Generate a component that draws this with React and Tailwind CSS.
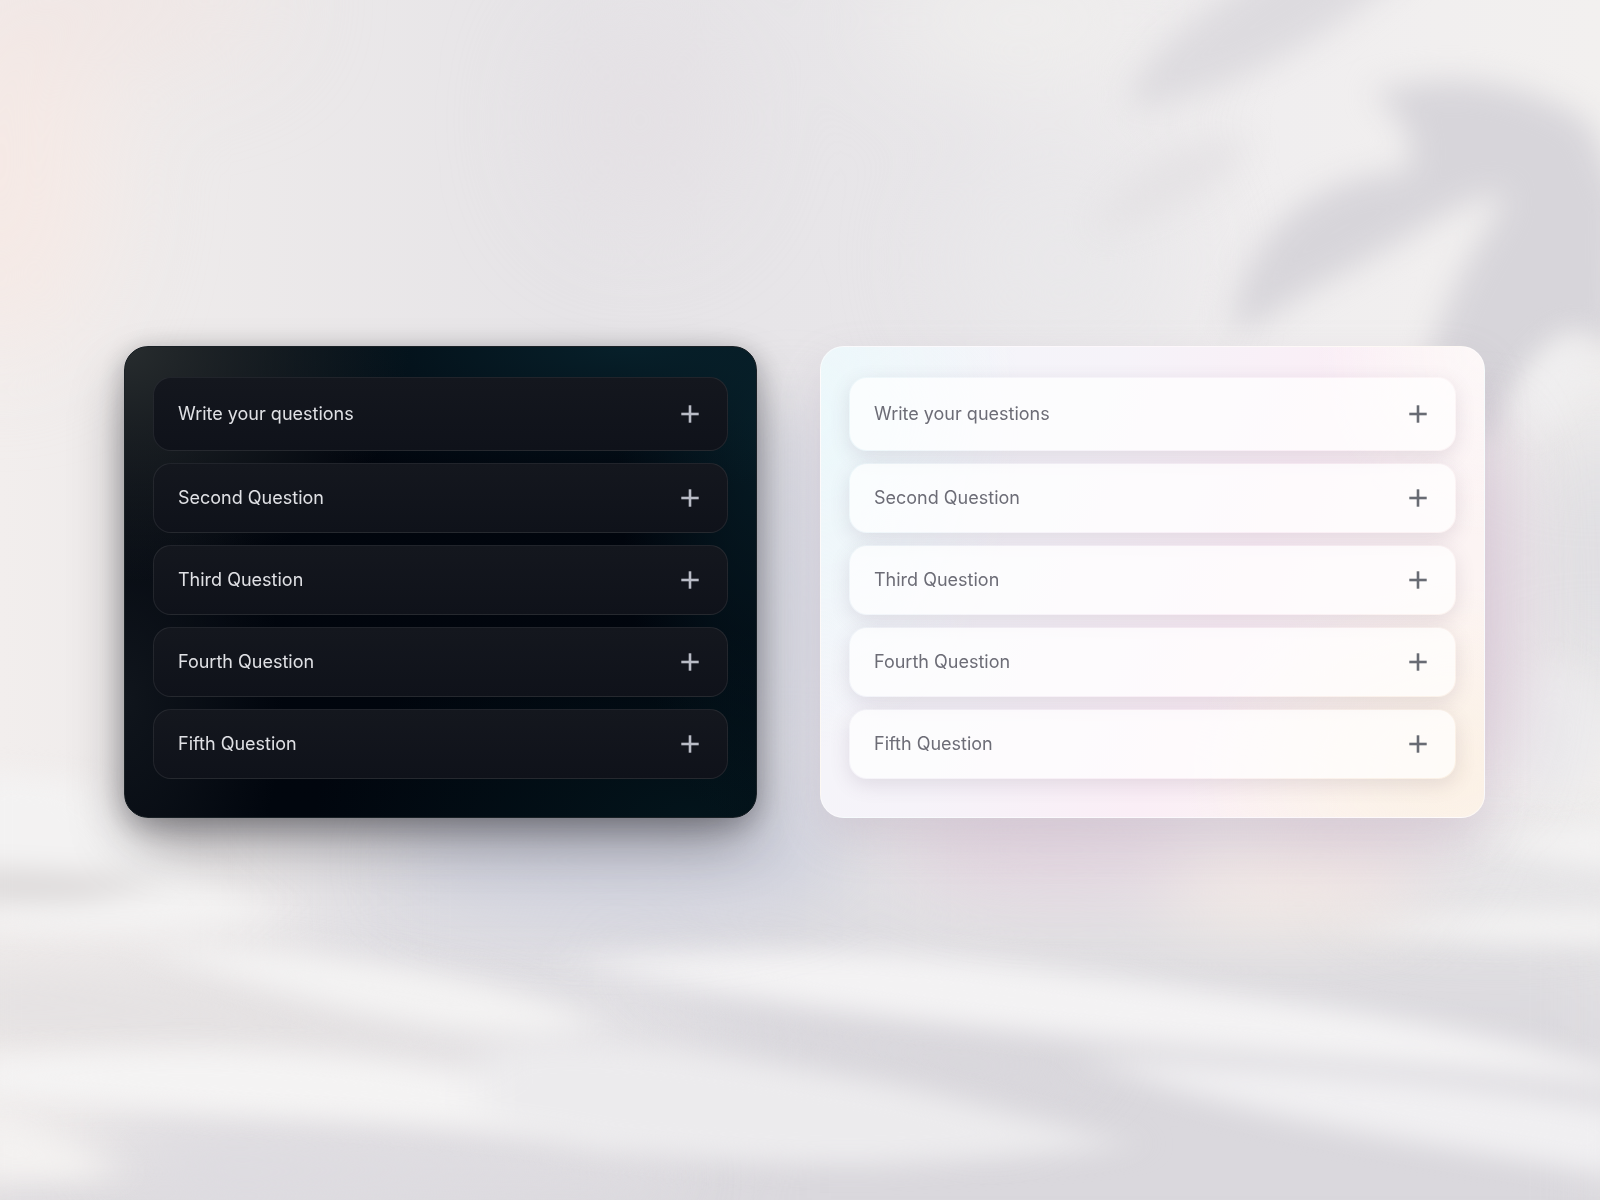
const questions = [
  "Write your questions",
  "Second Question",
  "Third Question",
  "Fourth Question",
  "Fifth Question",
];

function PlusIcon({ className }) {
  return (
    <svg viewBox="0 0 18 18" className={"size-[18px] shrink-0 " + className} fill="currentColor" aria-hidden="true">
      <rect x="0.3" y="7.7" width="17.4" height="2.6" />
      <rect x="7.7" y="0.3" width="2.6" height="17.4" />
    </svg>
  );
}

function Backdrop() {
  return (
    <svg
      className="absolute inset-0 size-full"
      viewBox="0 0 1600 1200"
      preserveAspectRatio="none"
      aria-hidden="true"
    >
      <defs>
        <linearGradient id="wall" x1="0" y1="0" x2="1" y2="0">
          <stop offset="0" stopColor="#f2eeed" />
          <stop offset="0.1" stopColor="#eeebeb" />
          <stop offset="0.35" stopColor="#e6e4e7" />
          <stop offset="0.6" stopColor="#e8e6e9" />
          <stop offset="0.8" stopColor="#f0eeef" />
          <stop offset="1" stopColor="#f2f0ef" />
        </linearGradient>
        <filter id="b14" x="-40%" y="-40%" width="180%" height="180%" colorInterpolationFilters="sRGB">
          <feGaussianBlur stdDeviation="15" />
        </filter>
        <filter id="b20" x="-40%" y="-60%" width="180%" height="220%" colorInterpolationFilters="sRGB">
          <feGaussianBlur stdDeviation="24 13" />
        </filter>
        <filter id="b60" x="-60%" y="-60%" width="220%" height="220%" colorInterpolationFilters="sRGB">
          <feGaussianBlur stdDeviation="55" />
        </filter>
        <filter id="b40" x="-60%" y="-60%" width="220%" height="220%" colorInterpolationFilters="sRGB">
          <feGaussianBlur stdDeviation="34" />
        </filter>
      </defs>
      <rect width="1600" height="1200" fill="url(#wall)" />

      <g filter="url(#b60)">
        <ellipse cx="0" cy="170" rx="100" ry="180" fill="#f5e9e5" />
        <ellipse cx="100" cy="0" rx="170" ry="60" fill="#f0e6e4" />
        <ellipse cx="640" cy="120" rx="80" ry="100" fill="#e4e0e4" />
        <ellipse cx="1020" cy="20" rx="150" ry="50" fill="#f1f0ee" />
        <ellipse cx="1060" cy="260" rx="110" ry="90" fill="#e9e8ea" />
        <rect x="-60" y="1170" width="1720" height="160" fill="#d8d6db" />
        <rect x="700" y="960" width="960" height="300" fill="#dad8dd" />
        <rect x="850" y="860" width="800" height="110" fill="#e3e2e4" />
        <rect x="1530" y="430" width="140" height="260" fill="#dddce0" />
        <rect x="320" y="800" width="560" height="200" fill="#dddce1" />
      </g>
      <g filter="url(#b40)">
        <ellipse cx="1500" cy="880" rx="160" ry="40" fill="#e6e5e7" />
        <path d="M-60 965 C150 970 420 990 560 1040 L420 1055 L-60 1045 Z" fill="#e2dfe0" />
        <path d="M90 1120 C300 1115 520 1130 700 1180 L200 1230 Z" fill="#dddbe0" />
        <path d="M600 960 C760 990 860 1030 1100 1040 L1000 1110 C880 1080 760 1030 600 960 Z" fill="#d9d7dc" />
      </g>

      <g filter="url(#b14)" fill="#d7d5da">
        <path d="M1130 100 C1140 50 1220 0 1280 -40 L1420 -40 C1350 20 1260 85 1140 108 Z" fill="#dddbdf" />
        <path d="M1095 225 C1130 160 1190 135 1250 140 C1230 190 1160 222 1095 232 Z" fill="#e3e1e4" opacity="0.8" />
        <path d="M1372 94 C1450 66 1540 86 1590 124 L1622 200 L1620 350 L1530 320 C1500 360 1480 430 1450 450 L1420 420 C1430 300 1490 230 1505 196 C1470 190 1410 240 1320 285 C1285 302 1255 335 1232 326 C1245 235 1310 175 1408 172 C1418 130 1395 110 1372 94 Z" />
        <path d="M1480 300 C1540 250 1600 240 1620 260 L1620 330 C1560 320 1510 400 1490 450 L1460 410 Z" />
      </g>
      <g filter="url(#b14)">
        <ellipse cx="1552" cy="384" rx="26" ry="56" fill="#efeeef" transform="rotate(34 1552 384)" />
        <ellipse cx="1555" cy="730" rx="45" ry="65" fill="#ebeaec" />
      </g>

      <g filter="url(#b20)" fill="#f3f2f2">
        <path d="M-40 770 L90 780 C130 830 180 880 290 915 C180 938 60 935 -40 925 Z" />
        <path d="M-40 866 C40 870 100 870 160 882 L90 902 L-40 904 Z" fill="#dedbdb" />
        <path d="M150 945 C300 950 480 965 610 1028 C480 1050 330 1015 150 948 Z" />
        <path d="M-40 1060 C140 1045 340 1040 520 1085 C680 1110 760 1130 800 1160 L600 1150 C440 1110 220 1125 -40 1090 Z" fill="#f4f3f3" />
        <path d="M480 1050 C640 1030 800 1070 900 1085 C1000 1110 1080 1130 1130 1145 C900 1175 640 1175 480 1110 Z" fill="#ecebed" />
        <path d="M-40 1105 C60 1125 110 1155 110 1180 L-40 1180 Z" fill="#f3f1f0" />
        <path d="M560 958 C740 946 900 945 1060 970 C1250 995 1500 1025 1640 1080 L1640 1090 C1400 1058 1100 1048 800 1005 C740 995 650 985 560 958 Z" fill="#f3f2f3" />
        <path d="M1080 1055 C1300 1070 1480 1080 1640 1115 L1640 1180 C1450 1145 1250 1125 1080 1055 Z" fill="#f0eff1" />
        <path d="M1480 838 L1640 820 L1640 870 C1590 865 1540 860 1480 838 Z" />
        <path d="M1330 925 C1440 912 1550 908 1640 912 L1640 942 C1540 947 1430 937 1330 925 Z" />
      </g>

      <g filter="url(#b40)">
        <ellipse cx="790" cy="640" rx="50" ry="240" fill="#cfd2de" opacity="0.75" />
        <ellipse cx="620" cy="860" rx="220" ry="56" fill="#c9ccdb" opacity="0.65" />
        <ellipse cx="1060" cy="850" rx="160" ry="50" fill="#dfccda" opacity="0.6" />
        <ellipse cx="1340" cy="840" rx="120" ry="34" fill="#e2d2dc" opacity="0.7" />
        <ellipse cx="1480" cy="610" rx="40" ry="190" fill="#dcc8d8" opacity="0.7" />
        <ellipse cx="1290" cy="895" rx="130" ry="30" fill="#f5ebe6" opacity="0.9" />
      </g>
    </svg>
  );
}

const themes = {
  dark: {
    panel:
      "border-[#1a2126] bg-[radial-gradient(ellipse_45%_50%_at_0%_0%,#272c2e,transparent),radial-gradient(ellipse_75%_30%_at_80%_0%,#07202a,transparent),radial-gradient(ellipse_22%_90%_at_100%_15%,#061b24,transparent),radial-gradient(ellipse_25%_60%_at_0%_75%,#10151c,transparent),radial-gradient(ellipse_60%_40%_at_90%_100%,#03141b,transparent),linear-gradient(#01050d,#01060e)] shadow-[0_30px_60px_-8px_rgba(20,20,28,0.42),0_6px_28px_rgba(20,20,28,0.28)]",
    row: "border border-white/8 bg-linear-to-b from-[#14171e] to-[#0f121a] text-[#e0e1e5]",
    icon: "text-[#b9bcc6]",
  },
  light: {
    panel:
      "border-white/50 bg-[radial-gradient(ellipse_30%_70%_at_0%_15%,#ecf8fb,transparent),radial-gradient(ellipse_25%_40%_at_100%_0%,#fdf8f8,transparent),radial-gradient(ellipse_40%_40%_at_95%_90%,#fbf1e5,transparent),linear-gradient(115deg,#f3f6fa_0%,#f6f3f9_35%,#faeef6_60%,#fcf4f3_85%,#fdf5f2_100%)] shadow-[0_20px_48px_-4px_rgba(160,140,165,0.28)]",
    row: "border border-transparent bg-white/70 bg-clip-padding text-[#6c6c76] shadow-[0_6px_20px_rgba(90,70,100,0.14)]",
    icon: "text-[#686b73]",
  },
};

function Accordion({ theme, label }) {
  const t = themes[theme];
  return (
    <section aria-label={label} className={"rounded-3xl border px-7 pt-[30px] pb-[38px] " + t.panel}>
      <ul className="flex flex-col gap-3">
        {questions.map((question, i) => (
          <li key={question}>
            <button
              type="button"
              aria-expanded="false"
              className={
                "flex w-full cursor-pointer items-center justify-between rounded-[18px] pr-7 pl-6 text-left text-lg " +
                (i === 0 ? "h-[74px] " : "h-[70px] ") +
                t.row
              }
            >
              <span>{question}</span>
              <PlusIcon className={t.icon} />
            </button>
          </li>
        ))}
      </ul>
    </section>
  );
}

export default function App() {
  return (
    <main className="relative flex min-h-screen items-center overflow-hidden bg-[#e9e7ea] pr-[115px] pb-9 pl-[124px] font-['Inter',sans-serif]">
      <Backdrop />
      <div className="relative grid grow grid-cols-[633fr_665fr] gap-[63px]">
        <Accordion theme="dark" label="Dark questions" />
        <Accordion theme="light" label="Light questions" />
      </div>
    </main>
  );
}
